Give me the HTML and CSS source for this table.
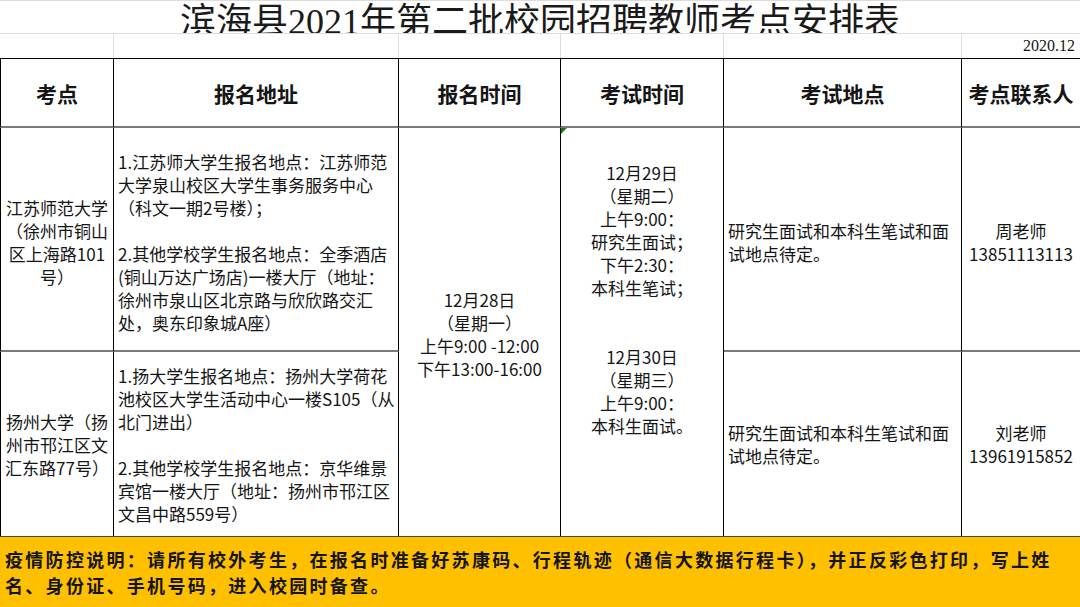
FILE: index.html
```html
<!DOCTYPE html>
<html lang="zh-CN">
<head>
<meta charset="utf-8">
<title>滨海县2021年第二批校园招聘教师考点安排表</title>
<link rel="stylesheet" href="styles.css">
</head>
<body>
<div class="sheet">
  <div class="title"><span>滨海县2021年第二批校园招聘教师考点安排表</span></div>

  <div class="gl"></div>
  <div class="gl"></div>
  <div class="gl"></div>
  <div class="gl"></div>
  <div class="gl"></div>
  <div class="gl date">2020.12</div>

  <div class="hd first">考点</div>
  <div class="hd">报名地址</div>
  <div class="hd">报名时间</div>
  <div class="hd">考试时间</div>
  <div class="hd">考试地点</div>
  <div class="hd last">考点联系人</div>

  <div class="c c1 rowA center">江苏师范大学<br>（徐州市铜山<br>区上海路101<br>号）</div>
  <div class="c rowA left">1.江苏师大学生报名地点：江苏师范<br>大学泉山校区大学生事务服务中心<br>（科文一期2号楼）；<br><br>2.其他学校学生报名地点：全季酒店<br>(铜山万达广场店)一楼大厅（地址：<br>徐州市泉山区北京路与欣欣路交汇<br>处，奥东印象城A座）</div>
  <div class="c span2 center reg">12月28日<br>（星期一）<br>上午9:00 -12:00<br>下午13:00-16:00</div>
  <div class="c span2 center exam">12月29日<br>（星期二）<br>上午9:00：<br>研究生面试；<br>下午2:30：<br>本科生笔试；<br><br><br>12月30日<br>（星期三）<br>上午9:00：<br>本科生面试。</div>
  <div class="c rowA left">研究生面试和本科生笔试和面<br>试地点待定。</div>
  <div class="c c6 rowA center">周老师<br>13851113113</div>

  <div class="c c1 center">扬州大学（扬<br>州市邗江区文<br>汇东路77号）</div>
  <div class="c left">1.扬大学生报名地点：扬州大学荷花<br>池校区大学生活动中心一楼S105（从<br>北门进出）<br><br>2.其他学校学生报名地点：京华维景<br>宾馆一楼大厅（地址：扬州市邗江区<br>文昌中路559号）</div>
  <div class="c left">研究生面试和本科生笔试和面<br>试地点待定。</div>
  <div class="c c6 center">刘老师<br>13961915852</div>

  <div class="foot"><p>疫情防控说明：请所有校外考生，在报名时准备好苏康码、行程轨迹（通信大数据行程卡），并正反彩色打印，写上姓<br>名、身份证、手机号码，进入校园时备查。</p></div>
</div>
</body>
</html>
```
FILE: styles.css
```css
* { box-sizing: border-box; }
html, body { margin: 0; padding: 0; }
body {
  width: 1080px;
  height: 607px;
  overflow: hidden;
  background: #fff;
  font-family: "Noto Sans CJK SC", sans-serif;
  color: #151515;
}
.sheet {
  display: grid;
  grid-template-columns: 114px 285px 162px 163px 238px 118px;
  grid-template-rows: 34px 24px 70px 224px 184px 71px;
}
.title {
  grid-column: 1 / -1;
  border-top: 1px solid #dcdcdc;
  border-bottom: 1px solid #dcdcdc;
  overflow: hidden;
  text-align: center;
  font-family: "Liberation Serif", "Noto Sans CJK SC", serif;
  font-size: 36px;
  line-height: 36px;
  padding-top: 3px;
  color: #1a1a1a;
  white-space: nowrap;
}
.gl { border-right: 1px solid #dcdcdc; }
.gl.date {
  border-right: none;
  text-align: right;
  font-family: "Liberation Serif", serif;
  font-size: 16px;
  line-height: 24px;
  padding-right: 5px;
}
.hd {
  border-top: 1px solid #000;
  border-right: 1px solid #000;
  border-bottom: 2px solid #7a7a7a;
  display: flex;
  align-items: center;
  justify-content: center;
  font-weight: 700;
  font-size: 21px;
  white-space: nowrap;
}
.hd.first, .c1 { border-left: 1px solid #000; }
.hd.last, .c6 { border-right: none; }
.c {
  border-right: 1px solid #000;
  display: flex;
  flex-direction: column;
  justify-content: center;
  font-size: 17px;
  line-height: 23px;
  white-space: nowrap;
}
.c6 { border-right: none; }
.rowA { border-bottom: 2px solid #7a7a7a; padding-top: 5px; }
.span2 { grid-row: span 2; }
.center { text-align: center; }
.left { padding-left: 4px; }
.reg { padding-top: 4px; }
.exam { padding-bottom: 66px; position: relative; }
.exam::before {
  content: "";
  position: absolute;
  left: 0;
  top: 0;
  border-top: 6px solid #1d7a1d;
  border-right: 6px solid transparent;
}
.foot {
  grid-column: 1 / -1;
  background: #ffc000;
  border-top: 1px solid #4a4536;
  font-weight: 700;
  font-size: 18px;
  letter-spacing: 2.3px;
  line-height: 26px;
  padding-left: 5px;
  display: flex;
  align-items: center;
  white-space: nowrap;
}
.foot p { margin: 0; }
```
